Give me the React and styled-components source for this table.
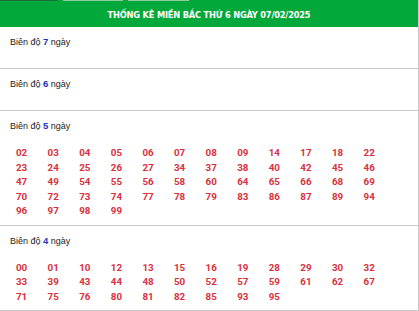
import React from "react";
import styled, { createGlobalStyle } from "styled-components";

const Global = createGlobalStyle`
  html, body { margin: 0; padding: 0; background: #fff; }
  body { font-family: "Liberation Sans", Arial, sans-serif; }
`;

const Panel = styled.div`
  width: 419px;
  box-sizing: border-box;
  border-right: 1px solid #c8c8c8;
  background: #fff;
`;

const TabStrip = styled.div`
  display: flex;
  height: 1px;
  background: #02a83a;
`;

const TabEdge = styled.div`
  width: ${(p) => p.$w}px;
  margin-left: ${(p) => p.$gap || 0}px;
  background: ${(p) => (p.$active ? "#1a6e37" : "#8fcb9d")};
`;

const Header = styled.div`
  height: 26px;
  background: #02a83a;
  color: #fff;
  display: flex;
  align-items: center;
  justify-content: center;
  font-family: "Liberation Sans Narrow", "DejaVu Sans Condensed", "Liberation Sans", sans-serif;
  font-weight: 700;
  font-size: 9.2px;
  letter-spacing: -0.2px;
`;

const Section = styled.div`
  border-bottom: 1px solid #c8c8c8;
  padding: 7px 0 6px;
`;

const Label = styled.div`
  padding-left: 10px;
  height: 16px;
  line-height: 16px;
  font-size: 9px;
  color: #222;
  font-family: "Liberation Sans", Arial, sans-serif;
`;

const Days = styled.b`
  color: #1c33c2;
  font-size: 9.5px;
`;

const Numbers = styled.div`
  display: grid;
  grid-template-columns: repeat(12, 31.6px);
  padding: 12px 0 0 16px;
  font-family: Roboto, "Liberation Sans", sans-serif;
  font-weight: 700;
  font-size: 9.8px;
  color: #d8303d;
`;

const Num = styled.span`
  height: 14.5px;
  line-height: 14.5px;
`;

const sections = [
  { d: 7, nums: [] },
  { d: 6, nums: [] },
  {
    d: 5,
    nums: "02 03 04 05 06 07 08 09 14 17 18 22 23 24 25 26 27 34 37 38 40 42 45 46 47 49 54 55 56 58 60 64 65 66 68 69 70 72 73 74 77 78 79 83 86 87 89 94 96 97 98 99".split(" "),
  },
  {
    d: 4,
    nums: "00 01 10 12 13 15 16 19 28 29 30 32 33 39 43 44 48 50 52 57 59 61 62 67 71 75 76 80 81 82 85 93 95".split(" "),
  },
];

export default function App() {
  return (
    <>
      <Global />
      <Panel>
        <TabStrip>
          <TabEdge $w={58} $active />
          <TabEdge $w={60} $gap={5} />
          <TabEdge $w={61} $gap={5} />
        </TabStrip>
        <Header>THỐNG KÊ MIỀN BẮC THỨ 6 NGÀY 07/02/2025</Header>
        {sections.map((s) => (
          <Section key={s.d}>
            <Label>
              Biên độ <Days>{s.d}</Days> ngày
            </Label>
            <Numbers>
              {s.nums.map((n) => (
                <Num key={n}>{n}</Num>
              ))}
            </Numbers>
          </Section>
        ))}
      </Panel>
    </>
  );
}
